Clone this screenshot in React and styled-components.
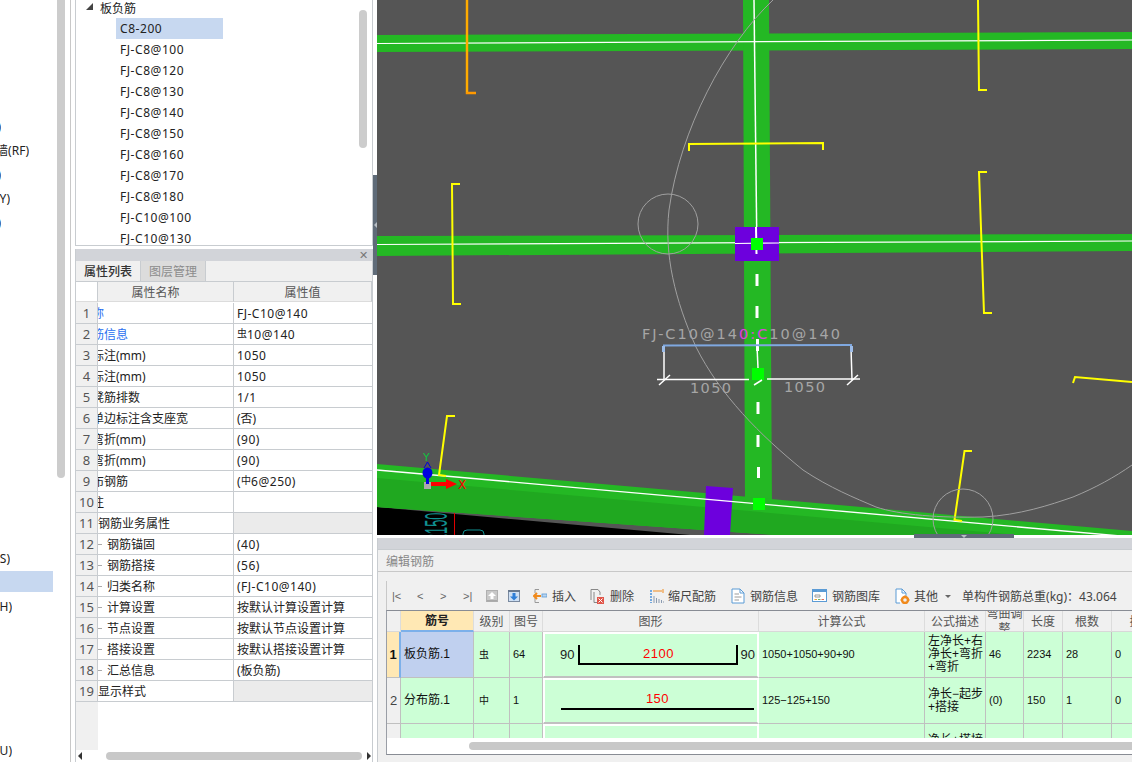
import React from "react";
import styled, { createGlobalStyle } from "styled-components";

const GlobalStyle = createGlobalStyle`
  html, body {
    margin: 0;
    padding: 0;
    background: #fff;
    overflow: hidden;
  }
  * {
    box-sizing: border-box;
  }
`;

const uiFont = `"Noto Sans", "Noto Sans CJK SC", sans-serif`;
const gridFont = `"Liberation Sans", "Noto Sans CJK SC", sans-serif`;

const Page = styled.div`
  display: flex;
  width: 1132px;
  height: 762px;
  overflow: hidden;
  font-family: ${uiFont};
  font-size: 12px;
  color: #222;
  background: #fff;
`;

/* left nav, scrolled so that only the tail of each label shows */
const Nav = styled.div`
  position: relative;
  flex: 0 0 71px;
  height: 100%;
  padding-top: 114px;
  border-right: 1px solid #c8c8c8;
`;

const NavThumb = styled.div`
  position: absolute;
  left: 57px;
  top: 0;
  width: 8px;
  height: 478px;
  background: #ccc;
  border-radius: 0 0 4px 4px;
`;

const NavRow = styled.div`
  display: flex;
  align-items: center;
  height: 24px;
  width: 53px;
  background: ${({ $selected }) => ($selected ? "#c7d8f0" : "transparent")};
  ${({ $selected }) => $selected && "height: 21px; margin: 1px 0 2px;"}
`;

const NavClip = styled.div`
  display: flex;
  justify-content: flex-end;
  width: ${({ $end }) => $end}px;
  overflow: hidden;
  white-space: nowrap;
`;

const Middle = styled.div`
  display: flex;
  flex-direction: column;
  flex: 0 0 298px;
  margin-left: 4px;
  height: 100%;
`;

const Tree = styled.div`
  position: relative;
  height: 246px;
  border: 1px solid #c8ccd0;
  border-top: 0;
  overflow: hidden;
`;

const TreeRow = styled.div`
  display: flex;
  align-items: center;
  height: 21px;
  padding-left: ${({ $level }) => ($level ? 40 : 24)}px;
`;

const TreeRoot = styled(TreeRow)`
  height: 18px;
  padding-bottom: 3px;
`;

const Caret = styled.span`
  position: absolute;
  left: 10px;
  top: 3px;
  width: 0;
  height: 0;
  border-left: 7px solid transparent;
  border-bottom: 7px solid #444;
`;

const TreeLabel = styled.span`
  display: flex;
  align-items: center;
  height: 21px;
  letter-spacing: 0.55px;
  ${({ $selected }) =>
    $selected
      ? "background: #c7d8f0; width: 107px; padding-left: 4px;"
      : "padding-left: 4px;"}
`;

const TreeThumb = styled.div`
  position: absolute;
  left: 283px;
  top: 10px;
  width: 8px;
  height: 138px;
  background: #ccc;
  border-radius: 4px;
`;

const Props = styled.div`
  display: flex;
  flex-direction: column;
  flex: 1;
  margin-top: 3px;
  border-left: 1px solid #c8ccd0;
  border-right: 1px solid #c8ccd0;
  background: #fff;
  min-height: 0;
`;

const PanelHead = styled.div`
  display: flex;
  align-items: center;
  justify-content: flex-end;
  flex: 0 0 12px;
  padding-right: 4px;
  background: #d2d4d9;
  color: #777;
  font-size: 11px;
  line-height: 12px;
`;

const Tabs = styled.div`
  display: flex;
  flex: 0 0 21px;
  background: #f0f0f0;
  border-bottom: 1px solid #c8ccd0;
`;

const Tab = styled.div`
  display: flex;
  align-items: center;
  justify-content: center;
  width: 65px;
  border-right: 1px solid #c8ccd0;
  font-weight: ${({ $active }) => ($active ? 500 : 400)};
  color: ${({ $active }) => ($active ? "#333" : "#8c8c8c")};
  background: ${({ $active }) => ($active ? "#f0f0f0" : "#dcdcdc")};
`;

const PropGrid = styled.div`
  display: grid;
  grid-template-columns: 22px 136px 138px;
  grid-auto-rows: 21px;
  flex: 1;
  align-content: start;
  background: linear-gradient(90deg, #f0f0f0 22px, #fff 22px);
  overflow: hidden;
`;

const PropHead = styled.div`
  display: flex;
  align-items: center;
  justify-content: center;
  height: 20px;
  padding-right: ${({ $shift }) => $shift || 0}px;
  background: ${({ $blank }) => ($blank ? "#fff" : "#f0f0f0")};
  border-right: 1px solid #c8ccd0;
  border-bottom: 1px solid #dcdcdc;
  color: #555;
`;

const RowNum = styled.div`
  display: flex;
  align-items: center;
  justify-content: center;
  background: #f0f0f0;
  border-right: 1px solid #c8ccd0;
  border-bottom: 1px solid #c8ccd0;
  color: #555;
  font-size: 13px;
`;

const NameCell = styled.div`
  display: flex;
  align-items: center;
  overflow: hidden;
  white-space: nowrap;
  border-right: 1px solid #c8ccd0;
  border-bottom: 1px solid #c8ccd0;
  color: ${({ $link }) => ($link ? "#2a6ff0" : "#222")};
`;

/* the grid is scrolled 18px to the right in the reference */
const NameText = styled.span`
  margin-left: ${({ $group, $child }) => ($child ? 5 : $group ? 0 : -18)}px;
`;

const TreeDash = styled.span`
  width: 4px;
  border-top: 1px solid #aaa;
`;

const ValueCell = styled.div`
  display: flex;
  align-items: center;
  padding-left: 3px;
  white-space: nowrap;
  background: ${({ $group }) => ($group ? "#ebebeb" : "#fff")};
  border-bottom: 1px solid #c8ccd0;
`;

const Latin = styled.span`
  letter-spacing: 0.5px;
`;

const Grade = styled.span`
  margin-top: -3px;
  font-size: 10px;
`;

const HScroll = styled.div`
  display: flex;
  align-items: center;
  flex: 0 0 12px;
  padding: 0 1px 0 2px;
`;

const ArrowLeft = styled.span`
  border-top: 4px solid transparent;
  border-bottom: 4px solid transparent;
  border-right: 4px solid #333;
`;

const ArrowRight = styled.span`
  margin-left: auto;
  border-top: 4px solid transparent;
  border-bottom: 4px solid transparent;
  border-left: 4px solid #333;
`;

const HThumb = styled.span`
  width: 256px;
  height: 8px;
  margin-left: 24px;
  border-radius: 4px;
  background: #c8c8c8;
`;

const Sash = styled.div`
  display: flex;
  flex: 0 0 4px;
  padding-top: 175px;
`;

const SashGrip = styled.div`
  display: flex;
  align-items: center;
  justify-content: center;
  width: 4px;
  height: 100px;
  background: #5f6b78;
`;

const SashArrow = styled.span`
  border-top: 3px solid transparent;
  border-bottom: 3px solid transparent;
  border-right: 3px solid #b8bec4;
`;

const Right = styled.div`
  display: flex;
  flex-direction: column;
  flex: 1;
  min-width: 0;
  height: 100%;
`;

const Canvas = styled.svg`
  display: block;
  flex: 0 0 535px;
  width: 755px;
  height: 535px;
`;

const Strip = styled.div`
  position: relative;
  flex: 0 0 3px;
  background: #fff;
`;

const StripGrip = styled.div`
  position: absolute;
  left: 537px;
  bottom: 0;
  display: flex;
  justify-content: center;
  align-items: flex-end;
  width: 100px;
  height: 4px;
  background: #5f6b78;
`;

const StripArrow = styled.span`
  border-left: 3px solid transparent;
  border-right: 3px solid transparent;
  border-top: 3px solid #b8bec4;
`;

const Editor = styled.div`
  display: flex;
  flex-direction: column;
  flex: 1;
  min-height: 0;
  background: #f0f0f0;
  border-left: 1px solid #c8ccd0;
`;

const EditorBar = styled.div`
  flex: 0 0 12px;
  background: #d2d4d9;
  border-bottom: 1px solid #c8ccd0;
`;

const EditorTitle = styled.div`
  display: flex;
  align-items: center;
  flex: 0 0 22px;
  padding-left: 8px;
  color: #888;
  border-bottom: 1px solid #c8c8c8;
`;

const Toolbar = styled.div`
  display: flex;
  align-items: center;
  height: 29px;
  margin: 9px 0 0 8px;
  padding-left: 5px;
  border-left: 1px solid #c8c8c8;
  white-space: nowrap;
  color: #444;
`;

const NavMark = styled.span`
  width: ${({ $w }) => $w}px;
  color: #666;
  font-size: 11px;
  font-family: ${gridFont};
`;

const ToolIcon = styled.svg`
  display: block;
  flex: none;
  width: ${({ $w }) => $w || 14}px;
  height: 16px;
  margin-left: ${({ $gap }) => $gap || 0}px;
`;

const ToolText = styled.span`
  margin-left: ${({ $gap }) => $gap || 5}px;
`;

const DropCaret = styled.span`
  margin: 1px 0 0 7px;
  border-left: 3px solid transparent;
  border-right: 3px solid transparent;
  border-top: 3px solid #666;
`;

const Frame = styled.div`
  display: flex;
  flex-direction: column;
  height: 145px;
  margin-left: 8px;
  border-top: 1px solid #888c94;
  border-left: 1px solid #9a9ea6;
  border-bottom: 1px solid #888c94;
  background: #fff;
`;

const Grid = styled.div`
  display: grid;
  grid-template-columns: 14px 73px 36px 33px 216px 166px 61px 38px 39px 49px 60px;
  grid-template-rows: 21px 46px 46px 46px;
  flex: 0 0 127px;
  overflow: hidden;
  font-family: ${gridFont};
`;

const HeadCell = styled.div`
  display: flex;
  align-items: center;
  justify-content: center;
  text-align: center;
  line-height: 15px;
  overflow: hidden;
  color: #555;
  font-family: ${uiFont};
  background: ${({ $active }) => ($active ? "#ffe8b4" : "#f0f0f0")};
  font-weight: ${({ $active }) => ($active ? 700 : 400)};
  border-right: 1px solid #dcdcdc;
  border-bottom: ${({ $active }) =>
    $active ? "2px solid #7cb0ea" : "1px solid #d8d8d8"};
  ${({ $active }) => $active && "color: #222;"}
`;

const RowHead = styled.div`
  display: flex;
  align-items: center;
  justify-content: center;
  font-size: 13px;
  font-weight: ${({ $active }) => ($active ? 700 : 400)};
  color: ${({ $active }) => ($active ? "#111" : "#444")};
  background: ${({ $active }) => ($active ? "#ffe8b4" : "#f0f0f0")};
  border-right: ${({ $active }) =>
    $active ? "2px solid #7cb0ea" : "1px solid #c0c0c0"};
  border-bottom: 1px solid #c0c0c0;
`;

const Cell = styled.div`
  display: flex;
  align-items: center;
  padding-left: ${({ $pad }) => ($pad === undefined ? 3 : $pad)}px;
  background: ${({ $active }) => ($active ? "#c0d0ef" : "#ccffd6")};
  border-right: 1px solid #c0c0c0;
  border-bottom: 1px solid #c0c0c0;
  font-size: ${({ $size }) => $size || 11}px;
  line-height: 13px;
  color: #111;
  overflow: hidden;
`;

const ShapeCell = styled.div`
  display: flex;
  align-items: center;
  padding-left: 16px;
  border: 1px solid #fff;
  border-right: 2px solid #fff;
  border-bottom: 2px solid #c0c0c0;
  box-shadow: inset 1px 1px 0 #fff;
  background: #ccffd6;
  font-size: 13px;
  color: #222;
`;

const HookBar = styled.div`
  display: flex;
  justify-content: center;
  width: 160px;
  height: 20px;
  margin: 0 2px 0 4px;
  border: 2px solid #000;
  border-top: 0;
  color: #f00;
  letter-spacing: 0.5px;
  line-height: 18px;
`;

const StraightBar = styled.div`
  width: 193px;
  height: 21px;
  margin: 0 0 3px 1px;
  border-bottom: 2px solid #000;
  color: #f00;
  letter-spacing: 0.5px;
  text-align: center;
  line-height: 19px;
`;

const FrameFoot = styled.div`
  display: flex;
  align-items: center;
  flex: 1;
  padding-left: 82px;
`;

const FootThumb = styled.div`
  flex: 1;
  height: 8px;
  border-radius: 4px 0 0 4px;
  background: #c8c8c8;
`;

const navRows = [
  { label: "现浇板(B)", end: 1 },
  { label: "后浇带墙(RF)", end: 29 },
  { label: "筏板基础(M)", end: 1 },
  { label: "柱墩(Y)", end: 10 },
  { label: "集水坑(K)", end: 1 },
  ...Array(13).fill({ label: "" }),
  { label: "板负筋(S)", end: 10 },
  { label: "", selected: true },
  { label: "板洞(H)", end: 12 },
  ...Array(5).fill({ label: "" }),
  { label: "板受力筋(U)", end: 12 },
];

const treeItems = [
  "C8-200",
  "FJ-C8@100",
  "FJ-C8@120",
  "FJ-C8@130",
  "FJ-C8@140",
  "FJ-C8@150",
  "FJ-C8@160",
  "FJ-C8@170",
  "FJ-C8@180",
  "FJ-C10@100",
  "FJ-C10@130",
];

const propRows = [
  { name: "名称", value: <Latin>FJ-C10@140</Latin>, link: true },
  { name: "钢筋信息", value: <><Grade>虫</Grade><Latin>10@140</Latin></>, link: true },
  { name: "左标注(mm)", value: <Latin>1050</Latin> },
  { name: "右标注(mm)", value: <Latin>1050</Latin> },
  { name: "马凳筋排数", value: <Latin>1/1</Latin> },
  { name: "非单边标注含支座宽", value: "(否)" },
  { name: "左弯折(mm)", value: <Latin>(90)</Latin> },
  { name: "右弯折(mm)", value: <Latin>(90)</Latin> },
  { name: "分布钢筋", value: <><Latin>(</Latin><Grade>中</Grade><Latin>6@250)</Latin></> },
  { name: "备注", value: "" },
  { name: "钢筋业务属性", value: "", group: true },
  { name: "钢筋锚固", value: <Latin>(40)</Latin>, child: true },
  { name: "钢筋搭接", value: <Latin>(56)</Latin>, child: true },
  { name: "归类名称", value: <Latin>(FJ-C10@140)</Latin>, child: true },
  { name: "计算设置", value: "按默认计算设置计算", child: true },
  { name: "节点设置", value: "按默认节点设置计算", child: true },
  { name: "搭接设置", value: "按默认搭接设置计算", child: true },
  { name: "汇总信息", value: "(板负筋)", child: true },
  { name: "显示样式", value: "", group: true },
];

const gridHeads = ["筋号", "级别", "图号", "图形", "计算公式", "公式描述", "弯曲调整", "长度", "根数", "搭接"];

const Drawing = () => (
  <Canvas viewBox="377 0 755 535">
    <rect x="377" y="0" width="755" height="535" fill="#555" />
    <polygon points="377,507 690,535 377,535" fill="#000" />

    {/* beams */}
    <polygon points="377,35 1132,32 1132,49 377,52" fill="#24b824" />
    <polygon points="377,236 1132,234 1132,251 377,256" fill="#24b824" />
    <polygon points="743,0 769,0 772,510 745,510" fill="#24b824" />
    <polygon points="377,464 1132,531 1132,560 377,507" fill="#24b824" />
    <polygon points="377,478 1132,545 1132,560 377,507" fill="#20a820" />

    {/* axis lines */}
    <g stroke="#fff" fill="none">
      <line x1="377" y1="43.5" x2="1132" y2="40" strokeWidth="1.2" />
      <line x1="377" y1="244.5" x2="1132" y2="241" strokeWidth="1.2" />
      <line x1="754" y1="0" x2="757" y2="258" strokeWidth="1.5" />
    </g>

    {/* columns */}
    <rect x="735" y="227" width="44" height="34" fill="#6d00dd" />
    <polygon points="706,486 733,488 730,535 704,535" fill="#6d00dd" />
    <line x1="377" y1="470" x2="1132" y2="537" stroke="#fff" strokeWidth="1.4" />
    <line x1="756" y1="227" x2="756.5" y2="254" stroke="#fff" strokeWidth="2" />
    <line x1="735" y1="243.5" x2="779" y2="243" stroke="#fff" strokeWidth="1.2" />

    {/* dashed centre of the selected bar */}
    <g stroke="#fff" strokeWidth="3">
      <line x1="757" y1="274" x2="757" y2="286" />
      <line x1="757" y1="306" x2="757" y2="318" />
      <line x1="757.5" y1="339" x2="757.5" y2="351" />
      <line x1="758" y1="402" x2="758" y2="414" />
      <line x1="758" y1="435" x2="758" y2="447" />
      <line x1="758.5" y1="467" x2="758.5" y2="478" />
    </g>
    <rect x="751" y="238" width="12" height="12" fill="#0f0" />
    <rect x="752" y="368" width="12" height="12" fill="#0f0" />
    <rect x="753" y="498" width="12" height="12" fill="#0f0" />

    {/* rebar marks */}
    <polyline points="467,0 467,93 476,93" fill="none" stroke="#ff9900" strokeWidth="2.5" />
    <line x1="467" y1="0" x2="467" y2="92" stroke="#ffc000" strokeWidth="1" />
    <g fill="none" stroke="#ff0" strokeWidth="2">
      <polyline points="689,151 689,144 823,143 823,150" />
      <polyline points="978,0 979,90 987,90" />
      <polyline points="987,172 979,172 984,313 992,313" />
      <polyline points="460,184 452,184 453,304 461,304" />
      <polyline points="1073,383 1075,377 1132,382" />
      <polyline points="455,416 447,416 439,475 446,476" />
      <polyline points="972,451 964.5,451 954.5,520 962,521" />
    </g>

    {/* view circles */}
    <g fill="none" stroke="#a0a0a0" strokeWidth="1">
      <circle cx="668" cy="224" r="30" />
      <circle cx="963" cy="519" r="30" />
      <path d="M773,0 C725,45 680,130 669,210 C664,255 675,300 696,347 C720,395 760,435 803,470 C830,488 855,498 876,507 C900,515 940,518 983,517 C1020,515 1050,505 1073,497 C1095,488 1115,477 1132,465" />
    </g>

    {/* dimension */}
    <text x="642" y="338.5" fontFamily="DejaVu Sans" fontSize="14.5" fill="#a6a6a6" textLength="198">
      FJ-C10@14<tspan fill="#e040e0">0:C</tspan>10@140
    </text>
    <line x1="663" y1="345.5" x2="852" y2="345" stroke="#7fa8e0" strokeWidth="2" />
    <g stroke="#fff" strokeWidth="1.5" fill="none">
      <line x1="664" y1="348" x2="664" y2="380" />
      <line x1="851" y1="348" x2="852" y2="380" />
      <line x1="757" y1="346" x2="758" y2="368" />
      <line x1="657" y1="379.5" x2="749" y2="379.5" />
      <line x1="767" y1="379" x2="860" y2="379" />
      <line x1="659" y1="385" x2="670" y2="375" />
      <line x1="847" y1="385" x2="858" y2="375" />
      <line x1="754" y1="385" x2="762" y2="380" />
    </g>
    <rect x="662" y="346" width="3" height="6" fill="#9cbce8" />
    <rect x="850" y="346" width="3" height="6" fill="#9cbce8" />
    <g fontFamily="DejaVu Sans" fontSize="14.5" fill="#a6a6a6">
      <text x="690" y="393" textLength="41">1050</text>
      <text x="784" y="392" textLength="41">1050</text>
    </g>

    {/* origin marker */}
    <rect x="424" y="482" width="7" height="7" fill="#aaa" />
    <rect x="426" y="476" width="3" height="8" fill="#0000e0" />
    <ellipse cx="427.5" cy="473" rx="5" ry="5.5" fill="#0000e0" />
    <path d="M427.5,462 L424,468 M427.5,462 L431,468" stroke="#0000e0" />
    <rect x="431" y="482" width="17" height="4" fill="#f00" />
    <polygon points="446,479 457,484 446,489" fill="#f00" />
    <text x="458" y="489" fontFamily="DejaVu Sans" fontSize="12" fill="#f00">X</text>
    <text x="423" y="461" fontFamily="DejaVu Sans" fontSize="11" fill="#10c040">Y</text>

    {/* drawing notes on the black slab */}
    <text
      transform="translate(447,541) rotate(-90) scale(0.4,1)"
      fontFamily="Liberation Sans"
      fontSize="32"
      fill="#109090"
    >
      2150
    </text>
    <line x1="454.5" y1="513" x2="454.5" y2="535" stroke="#e00000" strokeWidth="1" />
    <rect x="463" y="530" width="21" height="9" rx="4" fill="none" stroke="#109090" strokeWidth="1" />
  </Canvas>
);

const App = () => (
  <>
    <GlobalStyle />
    <Page>
      <Nav>
        <NavThumb />
        {navRows.map((row, i) => (
          <NavRow key={i} $selected={row.selected}>
            {row.label && <NavClip $end={row.end}>{row.label}</NavClip>}
          </NavRow>
        ))}
      </Nav>

      <Middle>
        <Tree>
          <Caret />
          <TreeRoot>板负筋</TreeRoot>
          {treeItems.map((item, i) => (
            <TreeRow key={item} $level={1}>
              <TreeLabel $selected={i === 0}>{item}</TreeLabel>
            </TreeRow>
          ))}
          <TreeThumb />
        </Tree>

        <Props>
          <PanelHead>✕</PanelHead>
          <Tabs>
            <Tab $active>属性列表</Tab>
            <Tab>图层管理</Tab>
          </Tabs>
          <PropGrid>
            <PropHead $blank />
            <PropHead $shift={20}>属性名称</PropHead>
            <PropHead>属性值</PropHead>
            {propRows.map((row, i) => (
              <React.Fragment key={row.name}>
                <RowNum>{i + 1}</RowNum>
                <NameCell $link={row.link}>
                  {row.child && <TreeDash />}
                  <NameText $group={row.group} $child={row.child}>{row.name}</NameText>
                </NameCell>
                <ValueCell $group={row.group}>{row.value}</ValueCell>
              </React.Fragment>
            ))}
          </PropGrid>
          <HScroll>
            <ArrowLeft />
            <HThumb />
            <ArrowRight />
          </HScroll>
        </Props>
      </Middle>

      <Sash>
        <SashGrip>
          <SashArrow />
        </SashGrip>
      </Sash>

      <Right>
        <Drawing />
        <Strip>
          <StripGrip>
            <StripArrow />
          </StripGrip>
        </Strip>
        <Editor>
          <EditorBar />
          <EditorTitle>编辑钢筋</EditorTitle>
          <Toolbar>
            <NavMark $w={25}>|&lt;</NavMark>
            <NavMark $w={23}>&lt;</NavMark>
            <NavMark $w={23}>&gt;</NavMark>
            <NavMark $w={23}>&gt;|</NavMark>
            <ToolIcon viewBox="0 0 12 16" $w={12}>
              <rect x="0.5" y="2.5" width="11" height="11" fill="#c8c8c8" stroke="#b0b0b0" />
              <path d="M6 4 L10 8 H7.5 V11 H4.5 V8 H2 Z" fill="#fff" />
              <rect x="1" y="12" width="10" height="1.5" fill="#a8a8a8" />
            </ToolIcon>
            <ToolIcon viewBox="0 0 12 16" $w={12} $gap={10}>
              <rect x="0.5" y="2.5" width="11" height="11" fill="#cfe0f4" stroke="#7a8aa0" />
              <rect x="0" y="2" width="12" height="2" fill="#6a7a90" />
              <path d="M6 12.5 L10 8.5 H7.5 V5 H4.5 V8.5 H2 Z" fill="#2f7fd8" />
            </ToolIcon>
            <ToolIcon viewBox="0 0 14 16" $gap={13}>
              <path d="M6 1.5 H2 V5 M2 10 V14.5 H6" fill="none" stroke="#999" />
              <path d="M8 8 H1 M4 5 L1 8 L4 11" fill="none" stroke="#f08a1c" strokeWidth="2" />
              <rect x="9" y="6" width="5" height="3" fill="#bcd6f0" stroke="#5b9bd5" strokeWidth="0.8" />
            </ToolIcon>
            <ToolText>插入</ToolText>
            <ToolIcon viewBox="0 0 14 16" $gap={14}>
              <path d="M1 12 V1.5 H8 L10 4 V7 M4 4 V14.5 H7" fill="none" stroke="#888" />
              <rect x="7" y="9" width="7" height="7" fill="#e0564a" />
              <path d="M8.5 10.5 L12.5 14.5 M12.5 10.5 L8.5 14.5" stroke="#fff" />
            </ToolIcon>
            <ToolText $gap={6}>删除</ToolText>
            <ToolIcon viewBox="0 0 14 16" $gap={16}>
              <path d="M1 2 V15" stroke="#3f8ad8" strokeWidth="1.4" strokeDasharray="2 1" />
              <path d="M3 3 H12" stroke="#f08a1c" />
              <path d="M13 1 V5" stroke="#f08a1c" />
              <path d="M4 15 V8 M6.5 15 V10 M9 15 V11 M11.5 15 V12 M14 15 V13" stroke="#8a9ab0" />
            </ToolIcon>
            <ToolText $gap={4}>缩尺配筋</ToolText>
            <ToolIcon viewBox="0 0 14 16" $gap={15}>
              <path d="M1 1 H9 L13 5 V15 H1 Z" fill="#fff" stroke="#5b9bd5" />
              <path d="M9 1 V5 H13" fill="none" stroke="#5b9bd5" />
              <path d="M3.5 6 H8 M3.5 9 H10.5 M3.5 12 H8" stroke="#9a9a9a" />
            </ToolIcon>
            <ToolText $gap={5}>钢筋信息</ToolText>
            <ToolIcon viewBox="0 0 15 16" $w={15} $gap={14}>
              <rect x="0.5" y="1.5" width="14" height="12" fill="#fff" stroke="#5b9bd5" />
              <rect x="0" y="1" width="15" height="3" fill="#5b9bd5" />
              <path d="M3 7 H8 V9 H3 Z" fill="none" stroke="#999" />
              <path d="M2.5 11.5 H5" stroke="#e8a33a" />
              <path d="M6 11.5 H8.5" stroke="#6cb86c" />
              <path d="M9.5 11.5 H12" stroke="#e06a5a" />
            </ToolIcon>
            <ToolText $gap={5}>钢筋图库</ToolText>
            <ToolIcon viewBox="0 0 15 16" $w={15} $gap={15}>
              <path d="M5 15 H1 V1 H7 L11 5 V8" fill="#fff" stroke="#5b9bd5" />
              <path d="M7 1 V5 H11" fill="none" stroke="#5b9bd5" />
              <circle cx="10" cy="12" r="3" fill="none" stroke="#f08a1c" strokeWidth="2.4" />
              <path d="M10 7.5 V9 M10 15 V16 M5.5 12 H7 M13 12 H14.5" stroke="#f08a1c" strokeWidth="1.4" />
            </ToolIcon>
            <ToolText $gap={4}>其他</ToolText>
            <DropCaret />
            <ToolText $gap={11}>单构件钢筋总重(kg)：43.064</ToolText>
          </Toolbar>
          <Frame>
            <Grid>
              <HeadCell />
              {gridHeads.map((head, i) => (
                <HeadCell key={head} $active={i === 0}>{head}</HeadCell>
              ))}

              <RowHead $active>1</RowHead>
              <Cell $active $size={12}>板负筋.1</Cell>
              <Cell $pad={5} $size={10}>虫</Cell>
              <Cell>64</Cell>
              <ShapeCell>
                90
                <HookBar>2100</HookBar>
                90
              </ShapeCell>
              <Cell>1050+1050+90+90</Cell>
              <Cell $size={12}>左净长+右净长+弯折+弯折</Cell>
              <Cell>46</Cell>
              <Cell>2234</Cell>
              <Cell>28</Cell>
              <Cell>0</Cell>

              <RowHead>2</RowHead>
              <Cell $size={12}>分布筋.1</Cell>
              <Cell $pad={5} $size={10}>中</Cell>
              <Cell>1</Cell>
              <ShapeCell>
                <StraightBar>150</StraightBar>
              </ShapeCell>
              <Cell>125−125+150</Cell>
              <Cell $size={12}>净长−起步+搭接</Cell>
              <Cell>(0)</Cell>
              <Cell>150</Cell>
              <Cell>1</Cell>
              <Cell>0</Cell>

              <RowHead />
              <Cell />
              <Cell />
              <Cell />
              <ShapeCell />
              <Cell />
              <Cell $size={12}>净长+搭接+弯折</Cell>
              <Cell />
              <Cell />
              <Cell />
              <Cell />
            </Grid>
            <FrameFoot>
              <FootThumb />
            </FrameFoot>
          </Frame>
        </Editor>
      </Right>
    </Page>
  </>
);

export default App;
